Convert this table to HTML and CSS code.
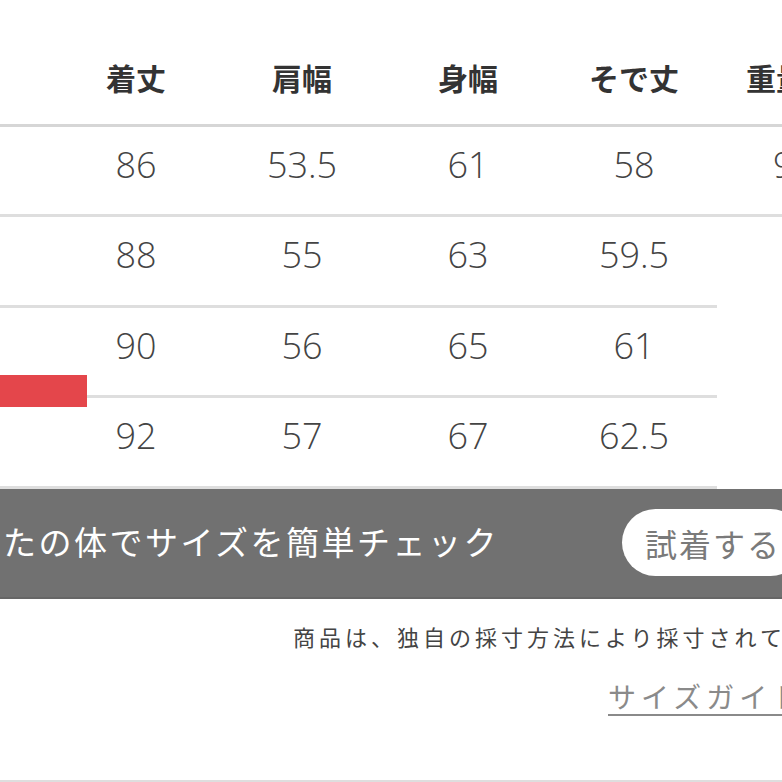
FILE: index.html
```html
<!DOCTYPE html>
<html lang="ja">
<head>
<meta charset="utf-8">
<title>サイズ表</title>
<link rel="stylesheet" href="styles.css">
</head>
<body>
<div class="page">
  <div class="table-wrap">
    <table class="size-table">
      <thead>
        <tr>
          <th></th>
          <th>着丈</th>
          <th>肩幅</th>
          <th>身幅</th>
          <th>そで丈</th>
          <th class="last">重量</th>
        </tr>
      </thead>
      <tbody>
        <tr>
          <td>S</td><td>86</td><td>53.5</td><td>61</td><td>58</td><td class="last">900</td>
        </tr>
        <tr>
          <td>M</td><td>88</td><td>55</td><td>63</td><td>59.5</td><td class="last blank"></td>
        </tr>
        <tr>
          <td>L</td><td>90</td><td>56</td><td>65</td><td>61</td><td class="last blank"></td>
        </tr>
        <tr>
          <td>XL</td><td>92</td><td>57</td><td>67</td><td>62.5</td><td class="last blank"></td>
        </tr>
      </tbody>
    </table>
    <div class="marker"></div>
  </div>

  <div class="banner">
    <p class="banner-text">あなたの体でサイズを簡単チェック</p>
    <span class="try-btn">試着する</span>
  </div>

  <div class="notes">
    <p class="note">商品は、独自の採寸方法により採寸されています。</p>
    <p class="guide"><a href="#">サイズガイド</a></p>
  </div>
</div>
</body>
</html>
```

FILE: styles.css
```css
* { box-sizing: border-box; }

html, body {
  margin: 0;
  padding: 0;
  background: #ffffff;
}

body {
  width: 782px;
  height: 782px;
  overflow: hidden;
  font-family: "Noto Sans CJK JP", "Noto Sans", sans-serif;
  color: #333333;
}

.page {
  width: 782px;
  height: 782px;
  overflow: hidden;
  position: relative;
  border-bottom: 2px solid #dedede;
}

.table-wrap {
  position: relative;
  margin-left: -113px;
  width: 996px;
}

.size-table {
  border-collapse: collapse;
  table-layout: fixed;
  width: 996px;
}

.size-table th,
.size-table td {
  width: 166px;
  text-align: center;
  padding: 0;
  white-space: nowrap;
}

.size-table .last {
  text-align: left;
  padding-left: 29px;
}

.size-table th {
  height: 125.5px;
  font-size: 30px;
  font-weight: 700;
  color: #333333;
  line-height: 1;
  vertical-align: top;
  padding-top: 62px;
  border-bottom: 3px solid #d6d6d6;
}

.size-table td {
  height: 90.4px;
  font-family: "Open Sans", "Noto Sans", sans-serif;
  font-weight: 300;
  font-size: 36px;
  line-height: 1;
  color: #444444;
  vertical-align: top;
  padding-top: 20px;
  border-bottom: 3px solid #dedede;
}

.size-table td.last {
  padding-left: 56px;
}

.size-table td.blank {
  border-bottom: 0;
}

.marker {
  position: absolute;
  left: 113px;
  top: 375px;
  width: 87px;
  height: 32px;
  background: #e4464b;
}

.banner {
  height: 110px;
  background: #717171;
  border-bottom: 2px solid #666666;
  display: flex;
  align-items: center;
  overflow: hidden;
}

.banner-text {
  margin: -3px 0 0 -68px;
  flex: 1 0 auto;
  color: #ffffff;
  font-size: 33px;
  letter-spacing: 2.5px;
  line-height: 1;
  white-space: nowrap;
}

.try-btn {
  flex: 0 0 auto;
  margin-right: -22px;
  height: 67px;
  padding: 0 23px;
  border-radius: 34px;
  background: #ffffff;
  color: #7a7a7a;
  font-size: 32px;
  letter-spacing: 2px;
  display: flex;
  align-items: center;
  white-space: nowrap;
}

.notes {
  padding-top: 22px;
  white-space: nowrap;
}

.note {
  margin: 0 0 0 293px;
  font-size: 22px;
  letter-spacing: 4px;
  line-height: 30px;
  color: #444444;
}

.guide {
  margin: 27px 0 0 608px;
  font-size: 28px;
  line-height: 36px;
  letter-spacing: 5px;
}

.guide a {
  color: #8a8a8a;
  text-decoration: underline;
  text-decoration-thickness: 2px;
  text-underline-offset: 6px;
}
```
